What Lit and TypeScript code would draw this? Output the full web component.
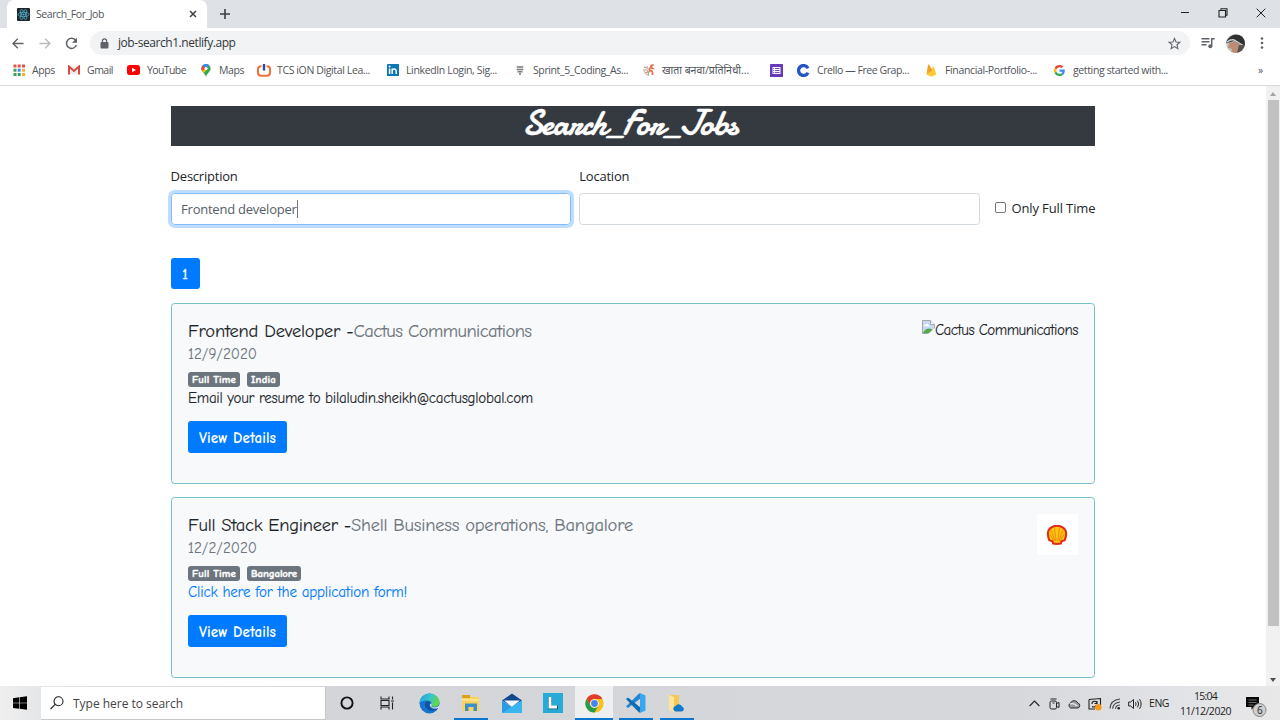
import { LitElement, html, css, svg } from "lit";
import { customElement, property } from "lit/decorators.js";

/** Text run whose tracking is adjusted so that it fills a given width. */
@customElement("fit-text")
class FitText extends LitElement {
  @property({ type: Number }) w = 0;
  static styles = css`
    :host { display: inline-block; white-space: pre; flex: none; }
    span { display: inline-block; white-space: pre; }
  `;
  render() { return html`<span><slot></slot></span>`; }
  firstUpdated() {
    const span = this.renderRoot.querySelector("span") as HTMLElement;
    const n = (this.textContent || "").length;
    const natural = span.getBoundingClientRect().width;
    if (n && natural) {
      span.style.letterSpacing = (this.w - natural) / n + "px";
      this.style.width = this.w + "px";
    }
  }
}

const icon = (w: number, h: number, box: string, body: unknown) =>
  html`<svg width=${w} height=${h} viewBox=${box} fill="none">${body}</svg>`;

const I = {
  react: icon(13, 13, "0 0 26 26", svg`<rect width="26" height="26" rx="2" fill="#20242b"/><g stroke="#53bcd5" stroke-width="1.5"><ellipse cx="13" cy="13" rx="11" ry="4.3"/><ellipse cx="13" cy="13" rx="11" ry="4.3" transform="rotate(60 13 13)"/><ellipse cx="13" cy="13" rx="11" ry="4.3" transform="rotate(120 13 13)"/></g><circle cx="13" cy="13" r="2.2" fill="#53bcd5"/>`),
  close: icon(8, 8, "0 0 8 8", svg`<path d="M1 1l6 6M7 1L1 7" stroke="#3c4043" stroke-width="1.5"/>`),
  plus: icon(10, 10, "0 0 10 10", svg`<path d="M5 0v10M0 5h10" stroke="#3c4043" stroke-width="1.6"/>`),
  min: icon(10, 10, "0 0 10 10", svg`<path d="M1 4.5h8" stroke="#222" stroke-width="1"/>`),
  max: icon(10, 10, "0 0 10 10", svg`<path d="M1 2.5h6.500v6.500H1zM3 2.500V.7h6v6.500H7.500" stroke="#222" stroke-width="1.100"/>`),
  x: icon(10, 10, "0 0 10 10", svg`<path d="M.7.7l8.600 8.600M9.300.7L.7 9.300" stroke="#222" stroke-width="1"/>`),
  back: icon(12, 11, "0 0 12 11", svg`<path d="M11.500 5.500H1M5.800.7L1 5.500l4.800 4.800" stroke="#5f6368" stroke-width="1.400"/>`),
  fwd: icon(12, 11, "0 0 12 11", svg`<path d="M.5 5.500H11M6.200.7L11 5.500l-4.800 4.800" stroke="#b9bbbe" stroke-width="1.300"/>`),
  reload: icon(13, 13, "0 0 13 13", svg`<path d="M10.700 3.300A5.100 5.100 0 1 0 11.400 8" stroke="#5f6368" stroke-width="1.500"/><path d="M12 .8v5H7z" fill="#5f6368"/>`),
  lock: icon(9, 11, "0 0 9 11", svg`<rect x=".5" y="4" width="8" height="6.500" rx="1" fill="#5f6368"/><path d="M2.400 4.500V3a2.100 2.100 0 0 1 4.200 0v1.500" stroke="#5f6368" stroke-width="1.200"/>`),
  star: icon(13, 13, "0 0 24 24", svg`<path d="M12 2.500l2.800 6.600 7.200.6-5.400 4.700 1.600 7-6.200-3.700-6.200 3.700 1.600-7L2 9.700l7.200-.6z" stroke="#5f6368" stroke-width="2"/>`),
  media: icon(14, 12, "0 0 14 12", svg`<path d="M.5 1.700h8M.5 4.700h8M.5 7.700h5M10.700 9V1.700h3" stroke="#5f6368" stroke-width="1.500"/><circle cx="9.300" cy="9.200" r="2" fill="#5f6368"/>`),
  avatar: icon(19, 19, "0 0 19 19", svg`<defs><clipPath id="av"><circle cx="9.500" cy="9.500" r="9.500"/></clipPath></defs><g clip-path="url(#av)"><rect width="19" height="19" fill="#c3c9c4"/><path d="M0 8Q6-4 19 3v9l-6-2-5-3-7 2z" fill="#303030"/><path d="M3 9l6-2 5 4-1 8H5l1-4-4-1z" fill="#bd8c75"/><path d="M1 8q5-4 9-1l8 5" stroke="#ccd3d5" stroke-width="1.300"/><path d="M13 11h6v8h-8z" fill="#555451"/></g>`),
  dots: icon(4, 12, "0 0 4 12", svg`<g fill="#5f6368"><circle cx="2" cy="1.500" r="1.300"/><circle cx="2" cy="6" r="1.300"/><circle cx="2" cy="10.500" r="1.300"/></g>`),
  apps: icon(12, 12, "0 0 12 12", svg`<g><path d="M.5.5h3v3h-3zM4.700.5h3v3h-3z" fill="#e45345"/><path d="M9 .5h3v3H9z" fill="#e45345"/><path d="M.5 4.700h3v3h-3zM.5 9h3v3h-3z" fill="#3ba25a"/><path d="M4.700 4.700h3v3h-3z" fill="#4787ed"/><path d="M9 4.700h3v3H9zM9 9h3v3H9z" fill="#f1b32c"/><path d="M4.700 9h3v3h-3z" fill="#3ba25a"/></g>`),
  gmail: icon(12, 10, "0 0 12 10", svg`<path d="M0 .5h12v9H0z" fill="#eee"/><path d="M1 9.500v-8L6 6l5-4.500v8" stroke="#d54b3d" stroke-width="2"/>`),
  yt: icon(13, 10, "0 0 13 10", svg`<rect width="13" height="10" rx="2.500" fill="#f00"/><path d="M5 2.700v4.600L9 5z" fill="#fff"/>`),
  maps: icon(10, 13, "0 0 10 13", svg`<path d="M5 0a4.600 4.600 0 0 0-4.600 4.600C.4 8 4 9 5 13c1-4 4.600-5 4.600-8.400A4.600 4.600 0 0 0 5 0z" fill="#34a853"/><path d="M1.500 1.600L5 4.600 8.200 1.300A4.600 4.600 0 0 0 1.500 1.600z" fill="#4285f4"/><path d="M1.500 1.600A4.600 4.600 0 0 0 .9 6.700L5 4.600z" fill="#ea4335"/><path d="M.9 6.700l1.700 2.200L6 5.500 5 4.600z" fill="#fbbc04"/><circle cx="5" cy="4.600" r="1.600" fill="#fff"/>`),
  tcs: icon(14, 13, "0 0 14 13", svg`<path d="M4.500 2.200H4a3 3 0 0 0-3 3v3.600a3 3 0 0 0 3 3h6a3 3 0 0 0 3-3V5.200a3 3 0 0 0-3-3h-.5" stroke="#ee7038" stroke-width="2"/><path d="M7 0v6.500" stroke="#264f96" stroke-width="2.400"/>`),
  li: icon(12, 12, "0 0 12 12", svg`<rect width="12" height="12" rx=".6" fill="#0c78b3"/><path d="M2.600 4.500V10M5.200 4.500V10M5.200 7c0-2.500 4-2.800 4 0v3" stroke="#fff" stroke-width="1.500"/><circle cx="2.600" cy="2.500" r=".95" fill="#fff"/>`),
  sprint: icon(8, 9, "0 0 8 9", svg`<path d="M.7 1h6.600M.7 3.500h6.600M1.500 5.800h5M3 8h2" stroke="#777" stroke-width="1.500"/>`),
  hindi: icon(12, 12, "0 0 12 12", svg`<path d="M1 3l3 1M0 6h4M2 9l3-1M5 11l1-4" stroke="#88ad91" stroke-width="1.200"/><path d="M10.500 1Q6 1.500 9 4q-4-.5-2 3 3-1 2.500 4" stroke="#e96d52" stroke-width="1.800"/><path d="M4 2q2 3 0 7" stroke="#f2a08d"/><path d="M1 7q1 4 5 4.500" stroke="#f2a08d"/>`),
  forms: icon(13, 13, "0 0 13 13", svg`<rect width="13" height="13" rx=".6" fill="#673ab7"/><path d="M2.500 3h8v7h-8z" fill="#fff"/><path d="M5 4.500h4.500M5 6.500h4.500M5 8.500h4.500M3.200 4.500h1M3.200 6.500h1M3.200 8.500h1" stroke="#673ab7" stroke-width=".9"/>`),
  crello: icon(13, 13, "0 0 13 13", svg`<path d="M11 4.200A5 5 0 1 0 11 8.800" stroke="#2855c5" stroke-width="3.300"/>`),
  fire: icon(11, 13, "0 0 11 13", svg`<path d="M.5 10.500L2 1c.1-.7.9-.7 1.200-.2L5 4z" fill="#f6a11b"/><path d="M.5 10.500L7 3c.4-.5.8-.4 1 0l2.300 7.500-4.800 2.300z" fill="#fdca32"/><path d="M.5 10.500L5 4l1 2z" fill="#f28a1c"/>`),
  google: icon(11, 11, "0 0 48 48", svg`<path fill="#EA4335" d="M24 9.500c3.540 0 6.710 1.220 9.210 3.600l6.850-6.850C35.900 2.380 30.470 0 24 0 14.620 0 6.510 5.380 2.560 13.220l7.980 6.190C12.430 13.720 17.740 9.500 24 9.500z"/><path fill="#4285F4" d="M46.980 24.550c0-1.570-.15-3.090-.38-4.550H24v9.020h12.940c-.58 2.960-2.260 5.480-4.780 7.180l7.730 6c4.510-4.180 7.090-10.360 7.090-17.650z"/><path fill="#FBBC05" d="M10.530 28.590a14.500 14.500 0 0 1 0-9.180l-7.980-6.190a24 24 0 0 0 0 21.560z"/><path fill="#34A853" d="M24 48c6.480 0 11.930-2.130 15.890-5.810l-7.730-6c-2.150 1.450-4.920 2.300-8.160 2.300-6.260 0-11.570-4.220-13.470-9.910l-7.980 6.190C6.510 42.620 14.620 48 24 48z"/>`),
  broken: icon(13, 14, "0 0 13 14", svg`<path d="M.5.5h8l4 4v9H.5z" fill="#c5daf5" stroke="#a6a6a6"/><path d="M8.500.5v4h4" fill="#fff" stroke="#a6a6a6"/><path d="M2 6q0-2 2-1.500Q5.500 3 6.500 5q1 0 .5 1.500z" fill="#fff"/><path d="M1 13q2-5 7-4.500l3 1.500-3.500 3z" fill="#56a944"/><path d="M13 8v6H6z" fill="#f8f9fa"/>`),
  shell: icon(22, 20, "0 0 22 20", svg`<path d="M7 18.500L6.600 16.300l-3.400-1.200Q-.2 6 5 2.700 11-1.300 17 2.700q5.200 3.300 1.800 12.400l-3.400 1.200L15 18.500q-4 .8-8 0z" fill="#fcc40c" stroke="#e02a1c" stroke-width="2"/><path d="M10.200 16L8.500 3.500M11.800 16l1.700-12.500M9 16L5.500 5.500M13 16l3.500-10.500M7.800 15.500L3.500 9M14.200 15.500L18.500 9" stroke="#ed7b17" stroke-width=".8"/>`),
  win: icon(14, 14, "0 0 14 14", svg`<path d="M0 2.200l6-.9v5.400H0zM6.600 1.200L14 .2v6.500H6.600zM0 7.300h6v5.500l-6-.9zM6.600 7.300H14v6.500l-7.400-1z" fill="#000"/>`),
  search: icon(14, 14, "0 0 14 14", svg`<circle cx="8.500" cy="5.200" r="4.500" stroke="#222" stroke-width="1.100"/><path d="M5.200 8.400L.6 13" stroke="#222" stroke-width="1.200"/>`),
  cortana: icon(14, 14, "0 0 14 14", svg`<circle cx="7" cy="7" r="5.600" stroke="#111" stroke-width="1.900"/>`),
  task: icon(15, 14, "0 0 15 14", svg`<path d="M1 .5V3h8V.5M1 4.500h8v5H1zM1 13.500V11h8v2.500M12.500.5v3M12.500 6.500v7M11 5h3" stroke="#222" stroke-width="1.100"/>`),
  edge: icon(21, 21, "0 0 21 21", svg`<defs><linearGradient id="eg" x1="0" y1="0" x2="1" y2=".4"><stop stop-color="#1d9ce4"/><stop offset=".55" stop-color="#37c4c8"/><stop offset="1" stop-color="#61d84e"/></linearGradient></defs><circle cx="10.500" cy="10.500" r="10" fill="#1474cf"/><path d="M.6 10C1 4 5.500.5 10.500.5c6 0 10 4.500 10 8.500 0 5-6 5.600-8.500 4 1.500-2 .5-5.500-3.500-5.500C4 7.500.5 9 .6 10z" fill="url(#eg)"/><path d="M7.200 8.500c-3 4 .5 9 5 9.300 3.500.2 6-1.600 7-3-2 1-6 1.500-8-.8-1.400-1.500-1-3.500.3-4.200-1-1.300-3-1.800-4.300-1.300z" fill="#12519d"/><path d="M12.200 10.200c.8 1.300.5 2.300-.2 3.100 2 2 6.500 1.200 8.200-.8l-.3 2.200c-2 1-6 1.500-8.200-.8-1.200-1.400-.7-3 .5-3.700z" fill="#dbe7ee"/>`),
  folder: icon(20, 19, "0 0 20 19", svg`<path d="M1 1h8l1 2h8v14H1z" fill="#f9d35d"/><path d="M1 1h8v3H1z" fill="#d9a21f"/><path d="M4 17V9.500h12V17h-3.500v-4h-5v4z" fill="#3d8fcb"/><path d="M1 5h17v2H1z" fill="#ffe28a"/>`),
  mail: icon(20, 20, "0 0 20 20", svg`<path d="M0 7.500L10 .5l10 7-10 6z" fill="#13488d"/><path d="M0 7.500L10 14l10-6.500V20H0z" fill="#2a9be0"/><path d="M2 7.500h16L10 13.800z" fill="#f4f7fa"/><path d="M0 20L11 13l9-5.500V20z" fill="#3ab5ee"/>`),
  l: icon(20, 20, "0 0 20 20", svg`<path d="M0 0h20v20H0z" fill="#27aad5"/><path d="M7 4v10.500h8" stroke="#14507a" stroke-width="3.400"/><path d="M7 4v10h7" stroke="#fff" stroke-width="2.800"/>`),
  chrome: icon(19, 19, "0 0 48 48", svg`<circle cx="24" cy="24" r="23" fill="#fbc116"/><path d="M4 12.500A23 23 0 0 1 44 12.500H24a11.500 11.500 0 0 0-10 17.200z" fill="#e23b2e"/><path d="M4 12.500l10 17.200A11.500 11.500 0 0 0 33.500 30L24 47A23 23 0 0 1 4 12.500z" fill="#269c4b"/><circle cx="24" cy="24" r="10.800" fill="#fff"/><circle cx="24" cy="24" r="8.600" fill="#4285f4"/>`),
  code: icon(21, 20, "0 0 21 20", svg`<path d="M1 13.500L14.500 0 16 5 3 15z" fill="#2187cf"/><path d="M1 6l2-1.500L16 15l-1.500 5z" fill="#0d6cb1"/><path d="M15 0l5.500 2.500v15L15 20z" fill="#35a8ef"/>`),
  cloudfolder: icon(17, 19, "0 0 17 19", svg`<path d="M1 1h10v15H1z" fill="#f1c95a"/><path d="M1 1l5 2v15l-5-2z" fill="#ffe497"/><path d="M7.500 17.500a2.800 2.800 0 0 1 0-5.500 3.700 3.700 0 0 1 6.500.5 2.600 2.600 0 0 1 0 5z" fill="#1579c9"/>`),
  up: icon(11, 7, "0 0 11 7", svg`<path d="M.6 6l4.900-5 4.900 5" stroke="#222" stroke-width="1.100"/>`),
  meet: icon(11, 12, "0 0 11 12", svg`<rect x="1" y="3" width="6.500" height="8" rx="1.500" stroke="#222"/><path d="M1.500 1h6M7.500 5.500l2.500-1v5l-2.500-1M3.500 5h2" stroke="#222"/>`),
  cloud: icon(14, 10, "0 0 14 10", svg`<path d="M3.500 9a2.800 2.800 0 0 1 0-5 4 4 0 0 1 7.300 0A2.600 2.600 0 0 1 11 9z" fill="#9a9c9f" stroke="#333"/><path d="M3 5q4-1.500 7 2" stroke="#eee" stroke-width="1.200"/>`),
  update: icon(14, 14, "0 0 14 14", svg`<path d="M1 2.500l11.500-1V8M1 2.500V12h6M4 7a2.500 2.500 0 0 1 5-.5M9 4v2.500H6.500M8 8a2.500 2.500 0 0 1-4 1.500" stroke="#222" stroke-width="1.100"/><circle cx="10.300" cy="10.300" r="3.300" fill="#f7981d"/>`),
  wifi: icon(12, 12, "0 0 12 12", svg`<path d="M1 10.500Q1.500 2 11 1M3.700 10.700Q4 4.700 11 4M6.500 10.800Q6.500 7.500 11 7" stroke="#444" stroke-width="1.100"/><circle cx="9.700" cy="10.200" r="1.300" fill="#222"/>`),
  sound: icon(14, 12, "0 0 14 12", svg`<path d="M.7 4h2L5.500 1.500v9L2.700 8h-2zM7.500 4.200q1.300 1.800 0 3.600M9.500 2.700q2.400 3.300 0 6.600M11.500 1.200q3.300 4.800 0 9.600" stroke="#222" stroke-width="1"/>`),
  note: icon(21, 22, "0 0 21 22", svg`<path d="M0 1h13v10H8l-2.500 2.500V11H0z" fill="#080808"/><path d="M2.500 4h8M2.500 6.500h8M2.500 9h5" stroke="#777" stroke-width=".9"/><circle cx="13.500" cy="14" r="6.500" fill="#cfcfcf" stroke="#888"/>`),
};

interface Bookmark { span: number; pic: unknown; label?: string; w?: number; }
const bookmarks: Bookmark[] = [
  { span: 55, pic: I.apps, label: "Apps", w: 23 },
  { span: 60, pic: I.gmail, label: "Gmail", w: 26 },
  { span: 72, pic: I.yt, label: "YouTube", w: 39 },
  { span: 58, pic: I.maps, label: "Maps", w: 25 },
  { span: 129, pic: I.tcs, label: "TCS iON Digital Lea...", w: 93 },
  { span: 127, pic: I.li, label: "LinkedIn Login, Sig...", w: 91 },
  { span: 129, pic: I.sprint, label: "Sprint_5_Coding_As...", w: 95 },
  { span: 128, pic: I.hindi, label: "खाता बनवा/प्रतिनिधी...", w: 87 },
  { span: 27, pic: I.forms },
  { span: 128, pic: I.crello, label: "Crello — Free Grap...", w: 92 },
  { span: 128, pic: I.fire, label: "Financial-Portfolio-...", w: 92 },
  { span: 205, pic: I.google, label: "getting started with...", w: 95 },
];

const base = css`
  * { box-sizing: border-box; }
  :host { box-sizing: border-box; flex: none; }
  svg { display: block; flex: none; }
`;

@customElement("browser-chrome")
class BrowserChrome extends LitElement {
  static styles = [base, css`
    :host { display: flex; flex-direction: column; height: 86px; color: #50545a; font: 10.5px/16px "Open Sans", "Noto Sans", sans-serif; background: #fff; border-bottom: 1px solid #d9dbde; }
    .strip { display: flex; height: 28px; background: #dee1e6; padding-left: 7px; align-items: stretch; }
    .tab { display: flex; align-items: center; width: 200px; background: #fff; border-radius: 7px 7px 0 0; padding: 0 10px 0 10px; }
    .tab fit-text { margin-left: 6px; }
    .tab .shut { margin-left: auto; }
    .new { align-self: center; margin-left: 13px; }
    .win { display: flex; margin-left: auto; align-items: center; gap: 28px; padding: 0 14px 3px 0; }
    .bar { display: flex; align-items: center; height: 30px; padding-left: 12px; }
    .bar > svg + svg { margin-left: 15px; }
    .bar > svg + svg + svg { margin-left: 14px; }
    .omni { display: flex; align-items: center; height: 24px; width: 1100px; margin-left: 12px; border-radius: 12px; background: #f1f3f4; padding: 0 9px 0 10px; font-size: 12px; color: #33363a; }
    .omni fit-text { margin-left: 9px; margin-right: auto; }
    .right { display: flex; align-items: center; margin-left: 11px; gap: 11px; }
    .right svg:last-child { margin-left: 4px; }
    .marks { display: flex; align-items: center; height: 24px; padding-left: 12px; }
    .mark { display: flex; align-items: center; flex: none; }
    .pic { display: flex; width: 13px; justify-content: center; margin-right: 7px; }
  `];
  render() {
    return html`
      <div class="strip">
        <div class="tab">${I.react}<fit-text w="68">Search_For_Job</fit-text><span class="shut">${I.close}</span></div>
        <div class="new">${I.plus}</div>
        <div class="win">${I.min}${I.max}${I.x}</div>
      </div>
      <div class="bar">${I.back}${I.fwd}${I.reload}
        <div class="omni">${I.lock}<fit-text w="117.500">job-search1.netlify.app</fit-text>${I.star}</div>
        <div class="right">${I.media}${I.avatar}${I.dots}</div>
      </div>
      <div class="marks">
        ${bookmarks.map((b) => html`<div class="mark" style="width:${b.span}px"><span class="pic">${b.pic}</span>${b.label ? html`<fit-text w=${b.w!}>${b.label}</fit-text>` : ""}</div>`)}
        <span class="more">»</span>
      </div>`;
  }
}

const jobs = [
  { title: "Frontend Developer -", tw: 165.5, company: "Cactus Communications", cw: 178, date: "12/9/2020", place: "India", pw: 25, text: "Email your resume to bilaludin.sheikh@cactusglobal.com", xw: 345, link: false },
  { title: "Full Stack Engineer -", tw: 163, company: "Shell Business operations, Bangalore", cw: 282, date: "12/2/2020", place: "Bangalore", pw: 46, text: "Click here for the application form!", xw: 219, link: true },
];

@customElement("job-page")
class JobPage extends LitElement {
  static styles = [base, css`
    :host { display: flex; height: 600px; overflow: hidden; background: #fff; color: #212529; font: 13px/20px "Open Sans", "Noto Sans", sans-serif; }
    .page { width: 1266px; padding: 20px 170.600px 0 170.600px; flex: none; }
    .head { height: 40px; background: #343a40; color: #fff; display: flex; justify-content: center; font: 400 35px/36px "Satisfy", "Damion", cursive; padding-right: 6px; -webkit-text-stroke: .5px; }
    .form { display: flex; margin-top: 20px; }
    .field { width: 401px; margin-right: 8px; }
    .label { height: 20px; display: flex; align-items: center; }
    .input { display: flex; align-items: center; height: 32px; margin-top: 7px; border: 1px solid #d3d8dd; border-radius: 3.500px; padding-left: 9.500px; color: #565e66; }
    .focus { border-color: #80bdff; box-shadow: 0 0 0 3px #bfdeff; }
    .caret { width: 1px; height: 18px; background: #777; }
    .check { display: flex; align-items: center; height: 32px; margin: 26px 0 0 7px; white-space: nowrap; }
    .box { width: 11px; height: 11px; border: 1px solid #767676; border-radius: 2px; margin-right: 5.500px; background: #fff; margin-bottom: 2px; }
    .pager { width: 29px; height: 31px; margin: 33px 0 14px; border-radius: 3px; background: #007bff; color: #fff; display: flex; align-items: center; justify-content: center; font-size: 14px; -webkit-text-stroke: .4px; padding-top: 2px; }
    .comic { font-family: "Comic Neue", "Comic Sans MS", "Lato", sans-serif; }
    .card { display: flex; justify-content: space-between; height: 181px; margin-bottom: 13px; border: 1px solid #74c0cb; border-radius: 3.500px; background: #f8f9fa; padding: 16px 16.500px 16px 16.400px; font-size: 15px; -webkit-text-stroke: .1px; }
    .title { font-size: 18.500px; height: 23px; line-height: 22px; display: flex; }
    .muted { color: #6c757d; }
    .date { height: 23px; line-height: 22px; }
    .badges { display: flex; gap: 7px; margin-top: 6px; }
    .badge { height: 15px; padding: 0 4px; border-radius: 3px; background: #6c757d; color: #fff; font-weight: 900; font-size: 10.800px; line-height: 16px; -webkit-text-stroke: .4px; }
    .text { height: 24px; line-height: 23px; display: flex; }
    .link { color: #007bff; }
    .btn { width: 99px; height: 32px; margin-top: 10px; border-radius: 3px; background: #007bff; color: #fff; font-weight: 700; display: flex; align-items: center; justify-content: center; padding-top: 2px; -webkit-text-stroke: 0; }
    .missing { display: flex; align-items: flex-start; }
    .logo { width: 41px; height: 41px; background: #fff; display: flex; align-items: center; justify-content: center; }
    .scroll { width: 14px; height: 600px; background: #f1f1f1; display: flex; flex-direction: column; align-items: center; justify-content: space-between; padding: 6px 0 4px; }
    .thumb { width: 11px; height: 526px; background: #c1c1c1; margin: 4px 0 auto; }
  `];
  render() {
    return html`
      <div class="page">
        <div class="head"><fit-text w="215">Search_For_Jobs</fit-text></div>
        <div class="form">
          <div class="field"><div class="label"><fit-text w="67">Description</fit-text></div><div class="input focus"><fit-text w="115.500">Frontend developer</fit-text><span class="caret"></span></div></div>
          <div class="field"><div class="label"><fit-text w="50">Location</fit-text></div><div class="input"></div></div>
          <div class="check"><span class="box"></span><fit-text w="84">Only Full Time</fit-text></div>
        </div>
        <div class="pager comic">1</div>
        ${jobs.map((j) => html`<div class="card comic">
          <div>
            <div class="title"><fit-text w=${j.tw}>${j.title}</fit-text><fit-text class="muted" w=${j.cw}>${j.company}</fit-text></div>
            <div class="date muted"><fit-text w="69">${j.date}</fit-text></div>
            <div class="badges"><span class="badge"><fit-text w="44">Full Time</fit-text></span><span class="badge"><fit-text w=${j.pw}>${j.place}</fit-text></span></div>
            <div class="text ${j.link ? "link" : ""}"><fit-text w=${j.xw}>${j.text}</fit-text></div>
            <div class="btn"><fit-text w="77">View Details</fit-text></div>
          </div>
          ${j.link ? html`<div class="logo">${I.shell}</div>` : html`<div class="missing">${I.broken}<fit-text w="143">Cactus Communications</fit-text></div>`}
        </div>`)}
      </div>
      <div class="scroll">
        ${icon(6, 4, "0 0 6 4", svg`<path d="M0 4l3-4 3 4z" fill="#a3a3a3"/>`)}
        <div class="thumb"></div>
        ${icon(6, 4, "0 0 6 4", svg`<path d="M0 0l3 4 3-4z" fill="#505050"/>`)}
      </div>`;
  }
}

@customElement("task-bar")
class TaskBar extends LitElement {
  static styles = [base, css`
    :host { display: flex; height: 34px; background: linear-gradient(90deg, #efefef 0, #e5e6e8 41px, #d4d5d9 330px, #d6d7da 1000px, #e2e3e6 1180px, #e8e8e9); color: #222; font: 12px/15px "Open Sans", "Noto Sans", sans-serif; }
    .start { width: 41px; display: flex; align-items: center; justify-content: center; padding-right: 1px; }
    .find { width: 285px; height: 33px; margin-top: 1px; background: #fff; border-right: 1px solid #c8c8c8; border-bottom: 1px solid #c8c8c8; display: flex; align-items: center; gap: 9px; padding-left: 9px; color: #444; }
    .app { width: 41.300px; display: flex; align-items: center; justify-content: center; border-bottom: 2px solid transparent; padding-top: 2px; }
    .open { width: 34px; margin: 0 3.650px; border-bottom-color: #0b77d0; }
    .active { width: 38px; margin: 0 1.650px; background: #eeeff0; }
    .tray { display: flex; margin-left: auto; align-items: center; gap: 7px; padding: 1px 14px 0 0; }
    .tray > svg:first-child { margin-right: 2px; }
    .tray fit-text { font-size: 10.500px; }
    .clock { display: flex; flex-direction: column; align-items: center; margin: 0 8px 0 4px; }
    .note { position: relative; padding-top: 6px; margin-right: -1px; }
    .count { position: absolute; left: 11px; top: 13px; font-size: 10px; line-height: 14px; }
  `];
  render() {
    const apps: [unknown, string][] = [[I.cortana, ""], [I.task, ""], [I.edge, ""], [I.folder, "open"], [I.mail, ""], [I.l, ""], [I.chrome, "open active"], [I.code, "open"], [I.cloudfolder, "open"]];
    return html`
      <div class="start">${I.win}</div>
      <div class="find">${I.search}<fit-text w="110">Type here to search</fit-text></div>
      ${apps.map(([pic, cls]) => html`<div class="app ${cls}">${pic}</div>`)}
      <div class="tray">${I.up}${I.meet}${I.cloud}${I.update}${I.wifi}${I.sound}
        <fit-text w="20">ENG</fit-text>
        <div class="clock"><fit-text w="23">15:04</fit-text><fit-text w="51">11/12/2020</fit-text></div>
        <div class="note">${I.note}<span class="count">6</span></div>
      </div>`;
  }
}

@customElement("app-root")
class AppRoot extends LitElement {
  static styles = css`:host { display: flex; flex-direction: column; width: 1280px; height: 720px; overflow: hidden; background: #fff; }`;
  render() { return html`<browser-chrome></browser-chrome><job-page></job-page><task-bar></task-bar>`; }
}
